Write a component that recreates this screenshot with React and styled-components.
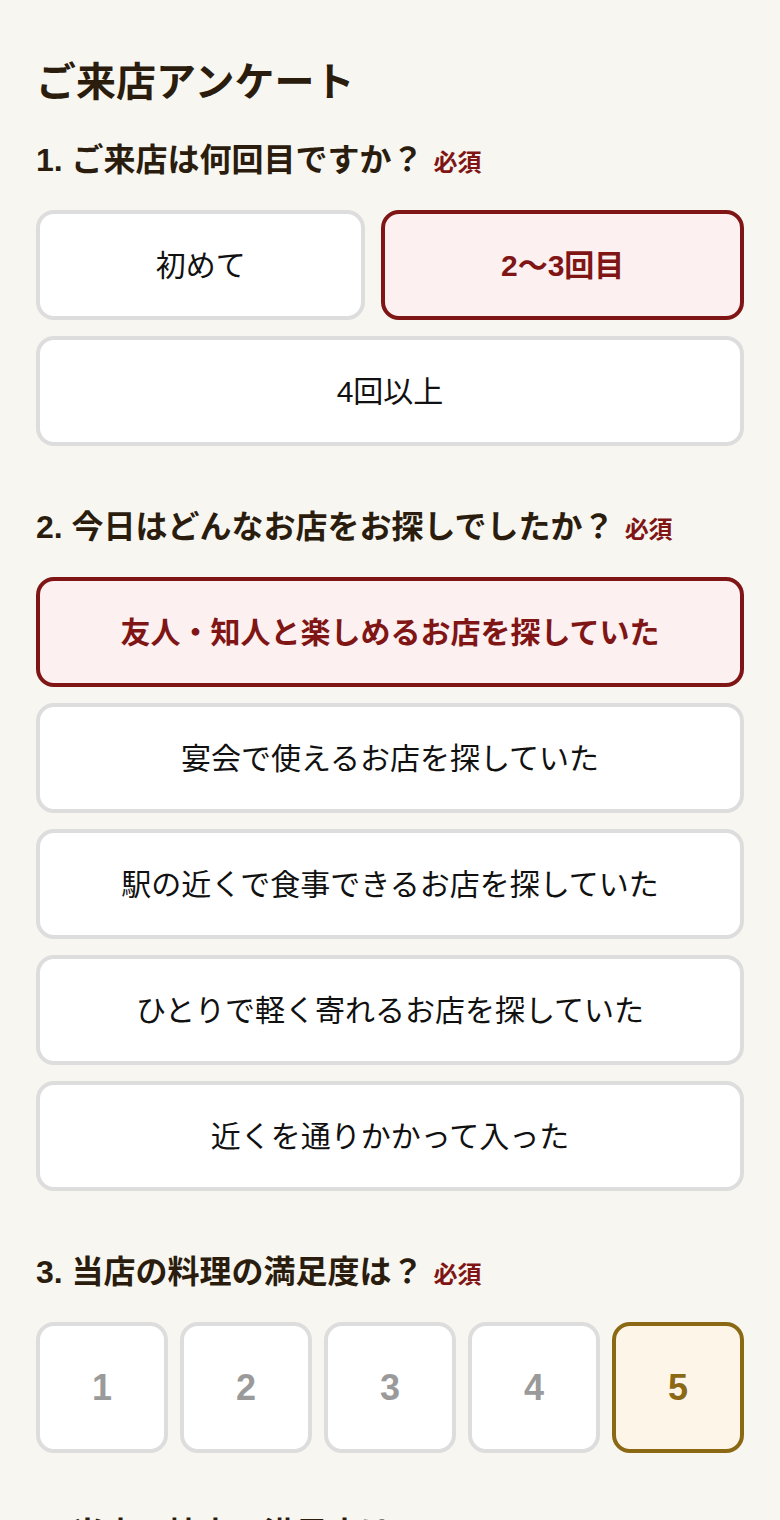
import styled, { createGlobalStyle } from 'styled-components';
import { useState } from 'react';

const GlobalStyle = createGlobalStyle`
	body {
		margin: 0;
		background: #f8f6f1;
		font-family: "Liberation Sans", "Noto Sans CJK JP", sans-serif;
		color: #2b1d0e;
	}
`

const visitOptions = ['初めて', '2〜3回目', '4回以上'];
const purposeOptions = [
	'友人・知人と楽しめるお店を探していた',
	'宴会で使えるお店を探していた',
	'駅の近くで食事できるお店を探していた',
	'ひとりで軽く寄れるお店を探していた',
	'近くを通りかかって入った',
];

const App = () => {
	const [visit, setVisit] = useState('2〜3回目');
	const [purpose, setPurpose] = useState(purposeOptions[0]);
	const [food, setFood] = useState(5);
	const [service, setService] = useState(null);

	return (
		<Page>
			<GlobalStyle />
			<Title>ご来店アンケート</Title>

			<Section>
				<Question>1. ご来店は何回目ですか？<Required>必須</Required></Question>
				<Choices>
					{visitOptions.map(o =>
						<Choice key={o} $active={visit === o} onClick={() => setVisit(o)}>{o}</Choice>
					)}
				</Choices>
			</Section>

			<Section>
				<Question>2. 今日はどんなお店をお探しでしたか？<Required>必須</Required></Question>
				<Choices>
					{purposeOptions.map(o =>
						<Choice key={o} $active={purpose === o} onClick={() => setPurpose(o)}>{o}</Choice>
					)}
				</Choices>
			</Section>

			<Section>
				<Question>3. 当店の料理の満足度は？<Required>必須</Required></Question>
				<Scale>
					{[1, 2, 3, 4, 5].map(n =>
						<ScaleItem key={n} $active={food === n} onClick={() => setFood(n)}>{n}</ScaleItem>
					)}
				</Scale>
			</Section>

			<Section>
				<Question>4. 当店の接客の満足度は？<Required>必須</Required></Question>
				<Scale>
					{[1, 2, 3, 4, 5].map(n =>
						<ScaleItem key={n} $active={service === n} onClick={() => setService(n)}>{n}</ScaleItem>
					)}
				</Scale>
			</Section>
		</Page>
	)
}

export default App;

const Page = styled.div`
	padding: 54px 36px 60px;
	display: flex;
	flex-direction: column;
	gap: 61px;
`

const Title = styled.h1`
	margin: 0 0 -31px;
	font-size: 40px;
	line-height: 56px;
	font-weight: 700;
`

const Section = styled.section`
	display: flex;
	flex-direction: column;
	gap: 30px;
`

const Question = styled.h2`
	margin: 0;
	font-size: 32px;
	line-height: 40px;
	font-weight: 700;
`

const Required = styled.span`
	margin-left: 10px;
	font-size: 24px;
	line-height: 1;
	font-weight: 700;
	color: #7f1515;
`

const Choices = styled.div`
	display: flex;
	flex-wrap: wrap;
	gap: 16px;
`

const Choice = styled.button`
	flex: 1 1 auto;
	height: 110px;
	padding: 0 80px 5px;
	box-sizing: border-box;
	background: ${p => p.$active ? '#fcf0f0' : '#ffffff'};
	border: 4px solid ${p => p.$active ? '#7f1515' : '#dddddd'};
	border-radius: 18px;
	font-family: "Liberation Sans", "Noto Sans CJK JP", sans-serif;
	font-size: 30px;
	font-weight: ${p => p.$active ? 700 : 400};
	color: ${p => p.$active ? '#7f1515' : '#111111'};
	cursor: pointer;
`

const Scale = styled.div`
	display: grid;
	grid-template-columns: repeat(5, 1fr);
	gap: 12px;
`

const ScaleItem = styled.button`
	height: 131px;
	box-sizing: border-box;
	background: ${p => p.$active ? '#fdf6e8' : '#ffffff'};
	border: 4px solid ${p => p.$active ? '#8b6914' : '#dddddd'};
	border-radius: 18px;
	font-family: "Liberation Sans", sans-serif;
	font-size: 36px;
	font-weight: 700;
	color: ${p => p.$active ? '#8b6914' : '#9a9a9a'};
	cursor: pointer;
`
